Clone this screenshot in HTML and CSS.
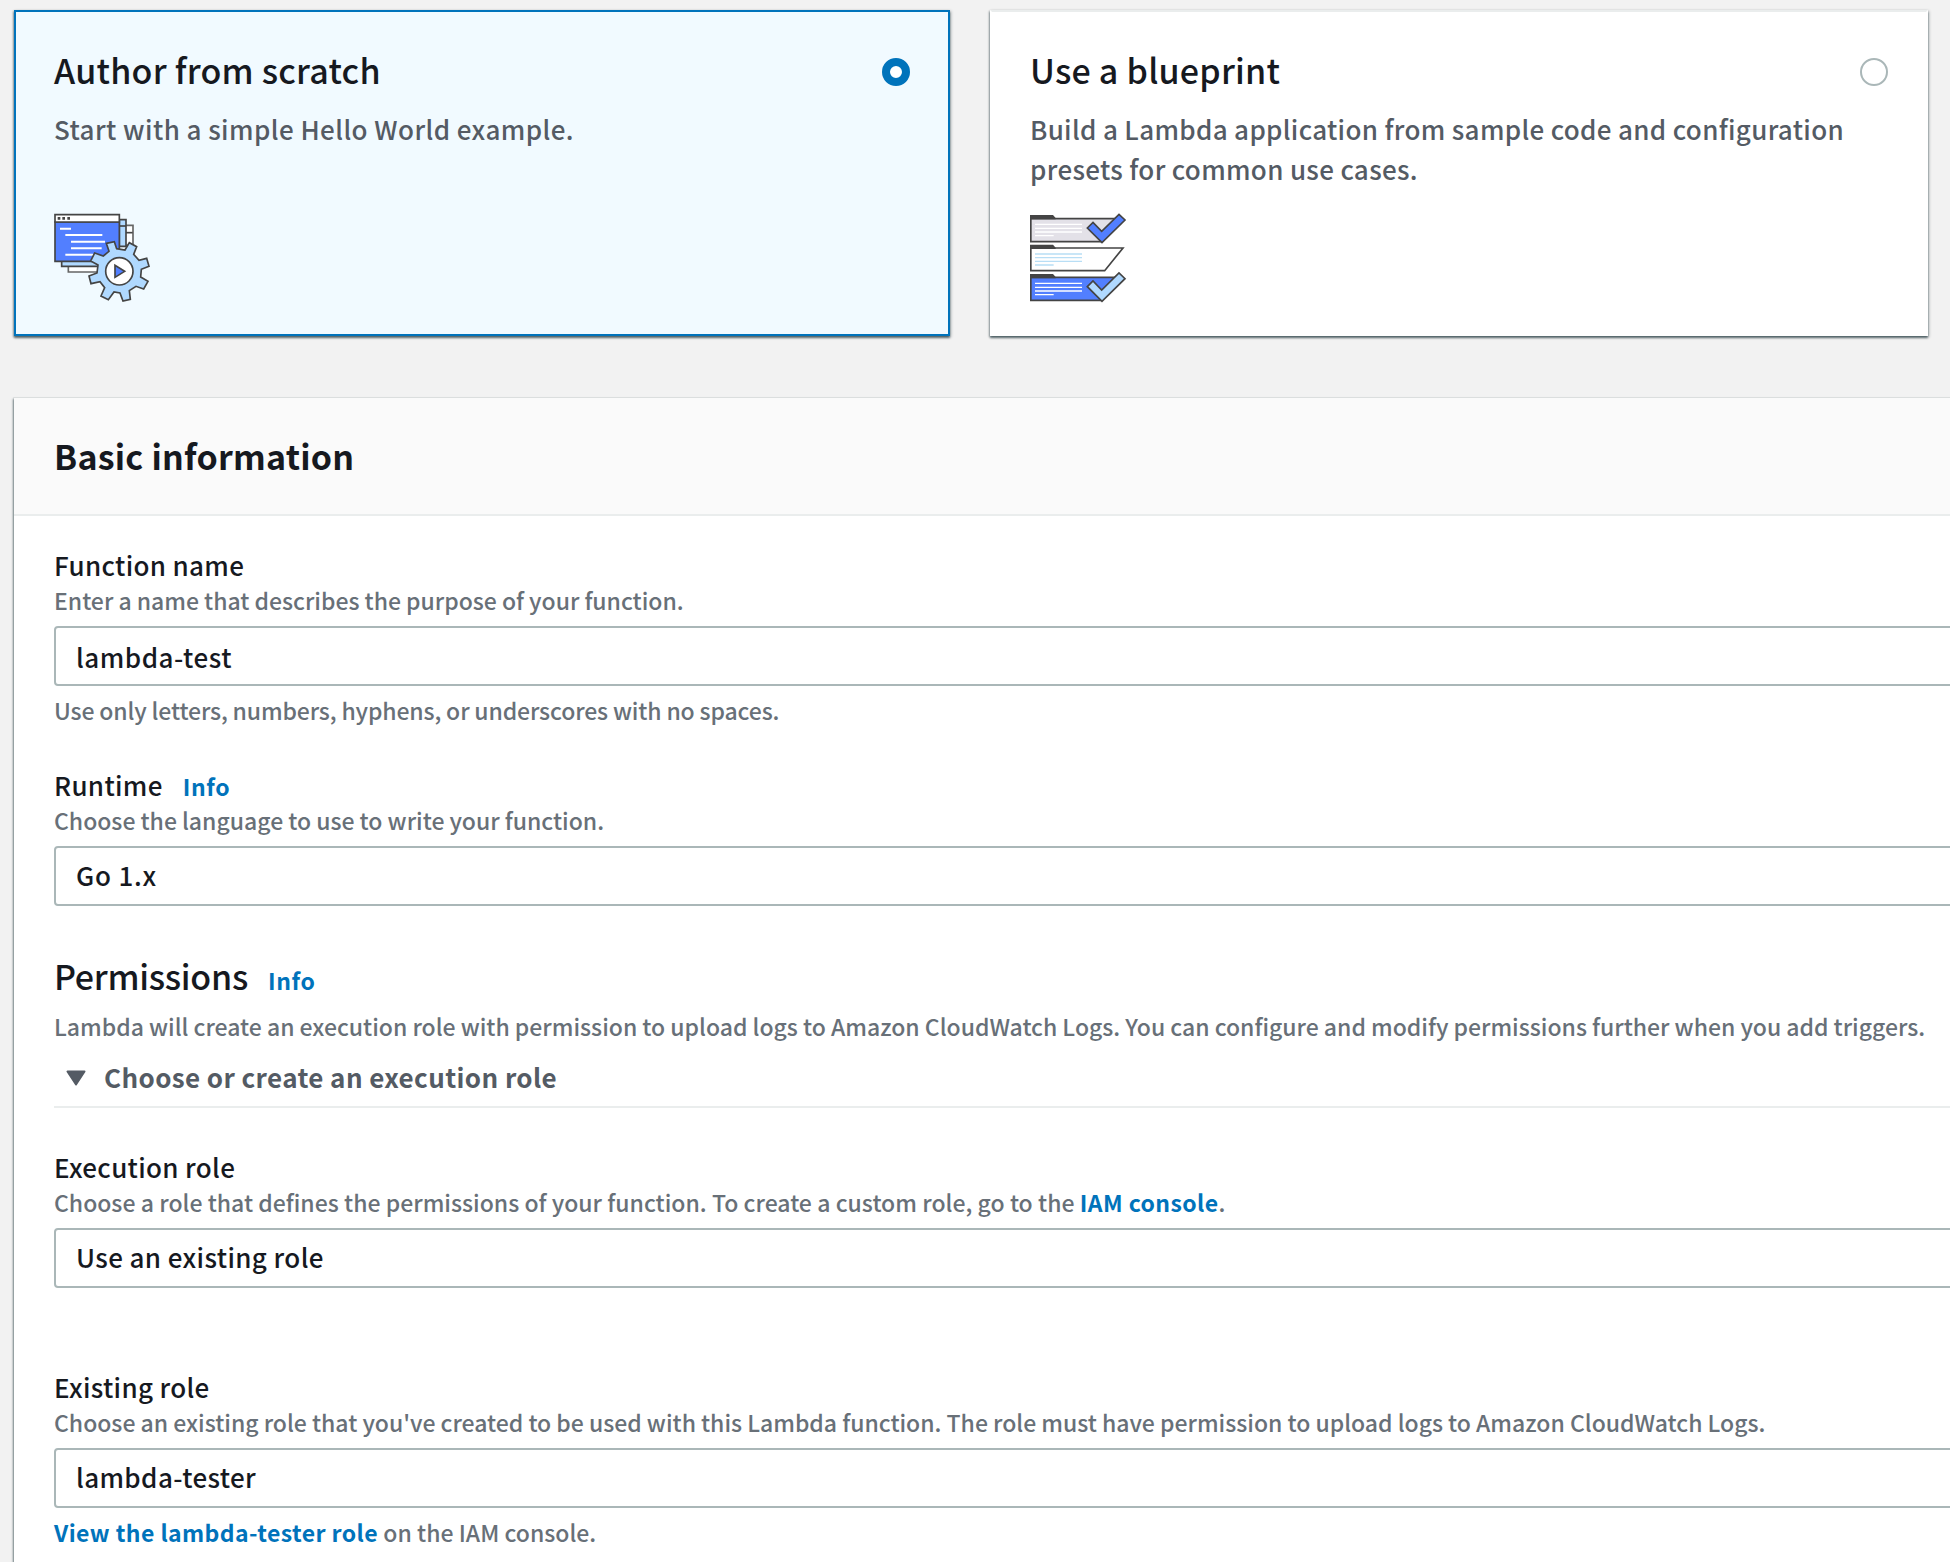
FILE: index.html
```html
<!DOCTYPE html>
<html lang="en">
<head>
<meta charset="utf-8">
<title>Create function</title>
<link rel="stylesheet" href="styles.css">
</head>
<body>
<main class="page">
  <section class="options">
    <article class="card card-selected">
      <div class="card-head"><h2 class="title">Author from scratch</h2><span class="radio radio-on"></span></div>
      <p class="card-text card-text-short">Start with a simple Hello World example.</p>
      <svg class="card-icon" width="98" height="89" viewBox="42 42 294 267" stroke="#444" stroke-width="5">
        <path d="M85 190h90v26H85zM245 76h34v60h-34z" fill="#fff" stroke="#666"/>
        <path d="M258 98h20" />
        <path d="M65 170h120v29H65zM238 59h20v80h-20z" fill="#b0d9ff"/>
        <path d="M238 78h20" />
        <path d="M45 66h193v118H45z" fill="#527fff"/>
        <path d="M45 44h193v22H45z" fill="#fff"/>
        <path d="M53 55h8M67 55h8M82 55h8" stroke-width="8"/>
        <path d="M60 86h33M76 105h111M93 125h102M93 145h92M76 164h84" stroke="#fff" stroke-width="6"/>
        <path d="M199 130L223 125L230 146L255 150L268 128L290 140L281 163L297 181L320 175L327 199L304 208L302 231L324 244L311 267L288 259L268 272L271 298L249 303L240 279L222 276L205 299L183 288L194 263L180 245L153 251L147 228L171 219L174 195L152 183L164 159L190 168L207 154Z" fill="#b0d9ff"/>
        <circle cx="238" cy="214" r="41" fill="#fff"/>
        <path d="M225 196v36l29-18z" fill="#527fff"/>
      </svg>
    </article>
    <article class="card">
      <div class="card-head"><h2 class="title">Use a blueprint</h2><span class="radio"></span></div>
      <p class="card-text">Build a Lambda application from sample code and configuration<br>presets for common use cases.</p>
      <svg class="card-icon" width="97" height="89" viewBox="60 42 291 267" stroke="#444" stroke-width="5">
        <path d="M62.500 56H322L273 125H62.500z" fill="#e3e1e8"/>
        <path d="M60 45h69l8 9v4H60z" fill="#444" stroke="none"/>
        <path d="M75 73h141M75 85h141M75 96h141M75 107h56" stroke="#fff" stroke-width="4"/>
        <path d="M62.500 144H339L284 212H62.500z" fill="#fff"/>
        <path d="M60 134h69l8 9v4H60z" fill="#444" stroke="none"/>
        <path d="M75 162h141M75 173h141M75 184h141M75 195h56" stroke="#b8def5" stroke-width="4"/>
        <path d="M62.500 232H322L273 301H62.500z" fill="#527fff"/>
        <path d="M60 222h69l8 9v4H60z" fill="#444" stroke="none"/>
        <path d="M75 250h141M75 262h141M75 273h141M75 284h56" stroke="#fff" stroke-width="4"/>
        <path d="M232 84l17-17 26 27 52-51 18 17-69 68z" fill="#527fff"/>
        <path d="M232 260l17-17 26 27 52-51 18 17-69 68z" fill="#b0d9ff"/>
      </svg>
    </article>
  </section>

  <section class="panel">
    <header class="panel-head"><h2 class="title title-bold">Basic information</h2></header>
    <div class="panel-body">
      <div class="field">
        <div class="label">Function name</div>
        <p class="hint">Enter a name that describes the purpose of your function.</p>
        <div class="control control-text">lambda-test</div>
        <p class="hint hint-below hint-tight">Use only letters, numbers, hyphens, or underscores with no spaces.</p>
      </div>
      <div class="field field-runtime">
        <div class="label">Runtime<a class="link info">Info</a></div>
        <p class="hint">Choose the language to use to write your function.</p>
        <div class="control control-version">Go 1.x</div>
      </div>
      <div class="permissions">
        <h2 class="title title-tight">Permissions<a class="link info">Info</a></h2>
        <p class="hint">Lambda will create an execution role with permission to upload logs to Amazon CloudWatch Logs. You can configure and modify permissions further when you add triggers.</p>
      </div>
      <div class="expander">
        <svg class="caret" width="20" height="16" viewBox="0 0 20 16"><path d="M1.500 1.500h17L10 14.500z" fill="#545b64" stroke="#545b64" stroke-width="2" stroke-linejoin="round"/></svg>
        <span>Choose or create an execution role</span>
      </div>
      <div class="field field-exec">
        <div class="label">Execution role</div>
        <p class="hint hint-loose">Choose a role that defines the permissions of your function. To create a custom role, go to the <a class="link">IAM console</a>.</p>
        <div class="control">Use an existing role</div>
      </div>
      <div class="field field-existing">
        <div class="label">Existing role</div>
        <p class="hint">Choose an existing role that you've created to be used with this Lambda function. The role must have permission to upload logs to Amazon CloudWatch Logs.</p>
        <div class="control">lambda-tester</div>
        <p class="hint hint-below hint-loose"><a class="link">View the lambda-tester role</a> on the IAM console.</p>
      </div>
    </div>
  </section>
</main>
</body>
</html>
```
FILE: styles.css
```css
* { box-sizing: border-box; }
body {
  margin: 0;
  background: #f2f2f2;
  color: #16191f;
  font-family: "Noto Sans CJK SC", "Noto Sans", sans-serif;
  font-size: 26px;
  font-weight: 500;
  overflow: hidden;
}
h2, p { margin: 0; font-weight: 500; }
.page { height: 1562px; overflow: hidden; padding: 10px 0 0 14px; white-space: nowrap; }
.options { display: grid; grid-template-columns: 936px 938px; gap: 40px; }
.card {
  height: 326px;
  padding: 36px 38px 0;
  border: 2px solid transparent;
  background: #fff padding-box;
  border-color: #eaeded #fff #fff;
  box-shadow: 0 2px 2px 0 rgba(0, 28, 36, .5), 1px 1px 3px 0 rgba(0, 28, 36, .25), -1px 1px 2px 0 rgba(0, 28, 36, .25);
}
.card-selected { background: #f1faff; border-color: #0073bb; }
.card-head { display: flex; justify-content: space-between; }
.title { font-size: 34px; line-height: 44px; letter-spacing: .23px; }
.title-bold { font-weight: 700; }
.title-tight { letter-spacing: -.28px; }
.radio { width: 28px; height: 28px; margin-top: 10px; border: 2px solid #aab7b8; border-radius: 50%; background: #fff; }
.radio-on { border: 8px solid #0073bb; }
.card-text { height: 80px; margin-top: 17px; line-height: 40px; color: #545b64; letter-spacing: .325px; }
.card-text-short { letter-spacing: .43px; }
.card-icon { display: block; margin-top: 25px; overflow: visible; }
.panel {
  width: 2100px;
  height: 1300px;
  margin-top: 62px;
  background: #fff;
  box-shadow: 0 0 0 1px rgba(0, 28, 36, .06), -1px 1px 2px 0 rgba(0, 28, 36, .5);
}
.panel-head { height: 118px; padding: 36px 40px 0; background: #fafafa; border-bottom: 2px solid #eaeded; }
.panel-body { padding: 32px 40px 0; }
.label { line-height: 34px; letter-spacing: .33px; }
.hint { margin-top: 4px; font-size: 23px; line-height: 28px; color: #687078; word-spacing: -.08px; }
.hint-tight { letter-spacing: -.136px; }
.hint-loose { word-spacing: .12px; }
.control { height: 60px; margin-top: 12px; padding-left: 20px; border: 2px solid #aab7b8; border-radius: 4px; line-height: 54px; letter-spacing: .385px; }
.control-text { line-height: 57px; letter-spacing: .52px; }
.control-version { letter-spacing: .78px; }
.hint-below { margin-top: 10px; }
.field-runtime { margin-top: 44px; }
.permissions { margin-top: 48px; }
.permissions .hint { margin-top: 14px; }
.link { color: #0073bb; font-size: 23px; line-height: 0; font-weight: 700; letter-spacing: .4px; }
.info { margin-left: 20px; letter-spacing: .62px; }
.expander { display: flex; gap: 18px; height: 48px; margin-top: 20px; padding-left: 12px; border-bottom: 2px solid #eaeded; line-height: 34px; font-weight: 700; color: #545b64; letter-spacing: .4px; }
.caret { margin-top: 10px; }
.field-exec { margin-top: 42px; }
.field-existing { margin-top: 82px; }
```
